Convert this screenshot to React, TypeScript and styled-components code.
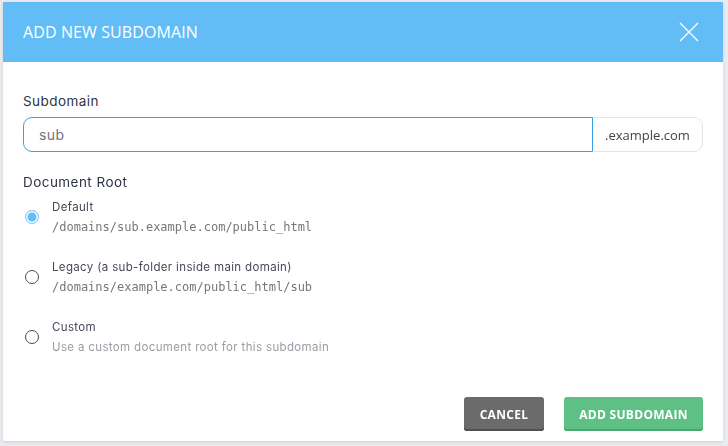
import React, { useState } from "react";
import styled, { createGlobalStyle } from "styled-components";

const GlobalStyle = createGlobalStyle`
  html, body {
    margin: 0;
    padding: 0;
    width: 728px;
    height: 446px;
    overflow: hidden;
    background: #e9ebef;
  }
  * {
    box-sizing: border-box;
  }
`;

const Page = styled.div`
  width: 728px;
  height: 446px;
  padding: 2px 5px 0 3px;
  display: flex;
  align-items: flex-start;
`;

const Modal = styled.div`
  width: 720px;
  height: 439px;
  background: #ffffff;
  display: flex;
  flex-direction: column;
  box-shadow: 0 1px 3px rgba(0, 0, 0, 0.12);
`;

const Header = styled.div`
  height: 60px;
  background: #62bdf6;
  display: flex;
  align-items: center;
  justify-content: space-between;
  padding: 0 24px 0 20px;
`;

const Title = styled.h2`
  margin: 0;
  font-family: "Open Sans", "Noto Sans", sans-serif;
  font-weight: 400;
  font-size: 16px;
  color: #ffffff;
  letter-spacing: 0.1px;
`;

const CloseButton = styled.button`
  width: 20px;
  height: 20px;
  padding: 0;
  border: none;
  background: transparent;
  display: flex;
  cursor: pointer;
`;

const Body = styled.div`
  flex: 1;
  padding: 30px 20px 0 20px;
  display: flex;
  flex-direction: column;
`;

const FieldLabel = styled.div<{ $top?: number }>`
  font-family: "Inter", "Noto Sans", sans-serif;
  font-size: 13.5px;
  line-height: 18px;
  color: #2f3542;
  letter-spacing: 0.45px;
  margin-top: ${(p) => p.$top ?? 0}px;
`;

const InputGroup = styled.div`
  display: flex;
  height: 35px;
  margin-top: 7px;
`;

const TextInput = styled.input`
  flex: 1;
  height: 100%;
  border: 1px solid #3aa0e6;
  border-radius: 9px 0 0 9px;
  padding: 0 15px;
  font-family: "Inter", "Noto Sans", sans-serif;
  font-size: 14px;
  color: #6f7480;
  letter-spacing: 0.4px;
  outline: none;
  caret-color: #333;
`;

const Addon = styled.div`
  width: 110px;
  height: 100%;
  border: 1px solid #e3e4e7;
  border-left: none;
  border-radius: 0 9px 9px 0;
  display: flex;
  align-items: center;
  justify-content: center;
  font-family: "Open Sans", "Noto Sans", sans-serif;
  font-size: 13px;
  color: #444;
`;

const Options = styled.div`
  display: flex;
  flex-direction: column;
  gap: 20px;
  margin-top: 6px;
`;

const OptionRow = styled.label`
  display: flex;
  align-items: center;
  gap: 13px;
  cursor: pointer;
`;

const Radio = styled.span<{ $checked: boolean }>`
  width: 14px;
  height: 14px;
  margin-left: 2px;
  border-radius: 50%;
  flex-shrink: 0;
  border: ${(p) => (p.$checked ? "1.5px solid #8ccdf8" : "1.6px solid #4a4a4a")};
  background: ${(p) => (p.$checked ? "#62bdf6" : "#fff")};
  box-shadow: ${(p) => (p.$checked ? "inset 0 0 0 1.5px #fff" : "none")};
`;

const OptionText = styled.div`
  display: flex;
  flex-direction: column;
`;

const OptionTitle = styled.span`
  font-family: "Inter", "Noto Sans", sans-serif;
  font-size: 11.5px;
  line-height: 20px;
  color: #454a57;
  letter-spacing: 0.35px;
`;

const OptionPath = styled.span<{ $mono?: boolean }>`
  font-family: ${(p) =>
    p.$mono ? `"DejaVu Sans Mono", monospace` : `"Inter", "Noto Sans", sans-serif`};
  font-size: ${(p) => (p.$mono ? "12px" : "11.5px")};
  line-height: 20px;
  color: ${(p) => (p.$mono ? "#777777" : "#9a9ca3")};
  letter-spacing: ${(p) => (p.$mono ? "0" : "0.35px")};
`;

const Footer = styled.div`
  display: flex;
  justify-content: flex-end;
  gap: 20px;
  padding: 0 20px 10px 20px;
`;

const Button = styled.button<{ $color: string; $shade: string; $width: number }>`
  width: ${(p) => p.$width}px;
  height: 34px;
  padding: 0;
  border: none;
  border-radius: 3px;
  background: ${(p) => p.$color};
  box-shadow: inset 0 -2px 0 ${(p) => p.$shade};
  color: #fff;
  font-family: "Open Sans", "Noto Sans", sans-serif;
  font-weight: 700;
  font-size: 12px;
  letter-spacing: 0.3px;
  white-space: nowrap;
  cursor: pointer;
`;

const options = [
  { id: "default", title: "Default", path: "/domains/sub.example.com/public_html", mono: true },
  {
    id: "legacy",
    title: "Legacy (a sub-folder inside main domain)",
    path: "/domains/example.com/public_html/sub",
    mono: true,
  },
  { id: "custom", title: "Custom", path: "Use a custom document root for this subdomain", mono: false },
];

const App: React.FC = () => {
  const [value, setValue] = useState("sub");
  const [root, setRoot] = useState("default");

  return (
    <>
      <GlobalStyle />
      <Page>
        <Modal>
          <Header>
            <Title>ADD NEW SUBDOMAIN</Title>
            <CloseButton aria-label="close">
              <svg width="20" height="20" viewBox="0 0 20 20">
                <path d="M1 1 L19 19 M19 1 L1 19" stroke="#fff" strokeWidth="1.3" fill="none" />
              </svg>
            </CloseButton>
          </Header>
          <Body>
            <FieldLabel>Subdomain</FieldLabel>
            <InputGroup>
              <TextInput autoFocus value={value} onChange={(e) => setValue(e.target.value)} />
              <Addon>.example.com</Addon>
            </InputGroup>
            <FieldLabel $top={21}>Document Root</FieldLabel>
            <Options>
              {options.map((o) => (
                <OptionRow key={o.id} onClick={() => setRoot(o.id)}>
                  <Radio $checked={root === o.id} />
                  <OptionText>
                    <OptionTitle>{o.title}</OptionTitle>
                    <OptionPath $mono={o.mono}>{o.path}</OptionPath>
                  </OptionText>
                </OptionRow>
              ))}
            </Options>
          </Body>
          <Footer>
            <Button $color="#6b6b6b" $shade="#4f4f4f" $width={80}>
              CANCEL
            </Button>
            <Button $color="#5fc086" $shade="#49a86f" $width={139}>
              ADD SUBDOMAIN
            </Button>
          </Footer>
        </Modal>
      </Page>
    </>
  );
};

export default App;
